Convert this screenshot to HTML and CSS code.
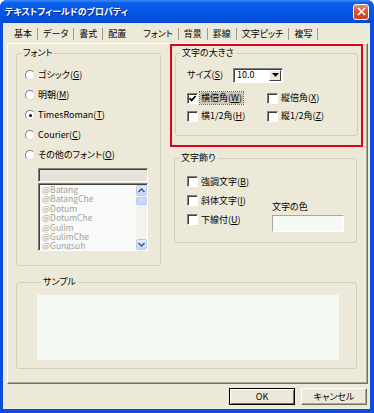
FILE: index.html
```html
<!DOCTYPE html>
<html lang="ja">
<head>
  <meta charset="UTF-8">
  <title>テキストフィールドのプロパティ</title>
  <link rel="stylesheet" href="styles.css">
</head>
<body>
  <div class="window">
    <div class="titlebar">
      <span class="title">テキストフィールドのプロパティ</span>
      <span class="close-btn">
        <svg width="9" height="9" viewBox="0 0 9 9"><path d="M1 1L8 8M8 1L1 8" stroke="#fff" stroke-width="1.7"/></svg>
      </span>
    </div>

    <div class="client">
      <ul class="tabs">
        <li>基本</li>
        <li>データ</li>
        <li>書式</li>
        <li class="no-sep">配置</li>
        <li class="active">フォント</li>
        <li>背景</li>
        <li>罫線</li>
        <li>文字ピッチ</li>
        <li>複写</li>
      </ul>

      <div class="panel">
        <div class="columns">
          <fieldset class="group font-group">
            <legend>フォント</legend>
            <div class="radio-list">
              <label class="radio-row"><span class="radio"></span>ゴシック(<u>G</u>)</label>
              <label class="radio-row"><span class="radio"></span>明朝(<u>M</u>)</label>
              <label class="radio-row"><span class="radio checked"></span>TimesRoman(<u>T</u>)</label>
              <label class="radio-row"><span class="radio"></span>Courier(<u>C</u>)</label>
              <label class="radio-row"><span class="radio"></span>その他のフォント(<u>O</u>)</label>
            </div>
            <div class="font-input"></div>
            <div class="font-list">
              <ul class="font-items">
                <li>@Batang</li>
                <li>@BatangChe</li>
                <li>@Dotum</li>
                <li>@DotumChe</li>
                <li>@Gulim</li>
                <li>@GulimChe</li>
                <li>@Gungsuh</li>
              </ul>
              <div class="scrollbar">
                <span class="scroll-btn">
                  <svg width="9" height="9" viewBox="0 0 9 9"><path d="M1.5 6L4.5 3L7.5 6" fill="none" stroke="#4d6185" stroke-width="1.6"/></svg>
                </span>
                <span class="scroll-track"><span class="scroll-thumb"></span></span>
                <span class="scroll-btn">
                  <svg width="9" height="9" viewBox="0 0 9 9"><path d="M1.5 3L4.5 6L7.5 3" fill="none" stroke="#4d6185" stroke-width="1.6"/></svg>
                </span>
              </div>
            </div>
          </fieldset>

          <div class="right-col">
            <div class="highlight">
              <fieldset class="group size-group">
                <legend>文字の大きさ</legend>
                <div class="size-row">
                  <span class="size-label">サイズ(<u>S</u>)</span>
                  <div class="select">
                    <span class="select-value">10.0</span>
                    <span class="select-btn">
                      <svg width="7" height="4" viewBox="0 0 7 4"><path d="M0 0H7L3.5 4Z" fill="#000"/></svg>
                    </span>
                  </div>
                </div>
                <div class="check-grid">
                  <label class="check-row">
                    <span class="checkbox">
                      <svg width="9" height="9" viewBox="0 0 9 9"><path d="M1.5 4.2L3.6 6.4L7.6 2" fill="none" stroke="#000" stroke-width="1.7"/></svg>
                    </span>
                    <span class="focus">横倍角(<u>W</u>)</span>
                  </label>
                  <label class="check-row"><span class="checkbox"></span>縦倍角(<u>X</u>)</label>
                  <label class="check-row"><span class="checkbox"></span>横1/2角(<u>H</u>)</label>
                  <label class="check-row"><span class="checkbox"></span>縦1/2角(<u>Z</u>)</label>
                </div>
              </fieldset>
            </div>

            <fieldset class="group deco-group">
              <legend>文字飾り</legend>
              <div class="deco-body">
                <div class="deco-checks">
                  <label class="check-row"><span class="checkbox"></span>強調文字(<u>B</u>)</label>
                  <label class="check-row"><span class="checkbox"></span>斜体文字(<u>I</u>)</label>
                  <label class="check-row"><span class="checkbox"></span>下線付(<u>U</u>)</label>
                </div>
                <div class="color-col">
                  <span class="color-label">文字の色</span>
                  <div class="color-box"></div>
                </div>
              </div>
            </fieldset>
          </div>
        </div>

        <fieldset class="group sample-group">
          <legend>サンプル</legend>
          <div class="sample-box"></div>
        </fieldset>
      </div>

      <div class="buttons">
        <button class="btn btn-default">OK</button>
        <button class="btn">キャンセル</button>
      </div>
    </div>
  </div>
</body>
</html>
```

FILE: styles.css
```css
body {
  margin: 0;
  background: #fff;
  font-family: "Noto Sans CJK JP", sans-serif;
  font-size: 9px;
  line-height: 12px;
  color: #000;
  font-feature-settings: "palt";
}

ul {
  list-style: none;
  margin: 0;
  padding: 0;
}

.window {
  width: 374px;
  height: 413px;
  background: #0b4fd8;
  border-radius: 7px 7px 0 0;
  display: flex;
  flex-direction: column;
  overflow: hidden;
}

.titlebar {
  height: 23px;
  box-sizing: border-box;
  display: flex;
  align-items: center;
  justify-content: space-between;
  padding: 0 5px 0 5px;
  background: linear-gradient(#3a8cf7, #0a5deb 3px, #0556e6 12px, #0450dc 19px, #0347cf);
  color: #fff;
}

.title {
  font-weight: bold;
  text-shadow: 1px 1px 0 #0a2a8a;
}

.close-btn {
  width: 14px;
  height: 14px;
  border: 1px solid #fff;
  border-radius: 3px;
  background: linear-gradient(#ea8a70, #dc5834 40%, #c8401c);
  display: flex;
  align-items: center;
  justify-content: center;
}

.client {
  flex: 1;
  margin: 0 4px 4px 3px;
  padding: 4px 2px 0 4px;
  background: #ece9d8;
  display: flex;
  flex-direction: column;
}

/* tab strip */
.tabs {
  display: flex;
  height: 16px;
  box-sizing: border-box;
  padding: 1px 0 0 2px;
}

.tabs li {
  height: 12px;
  padding: 0 5px;
  border-right: 1px solid #9d9b8f;
}

.tabs li.no-sep {
  border-right-color: transparent;
}

.tabs li.active {
  padding-left: 11px;
}

.panel {
  height: 341px;
  box-sizing: border-box;
  border: 1px solid;
  border-color: #fff #716f64 #716f64 #fff;
  box-shadow: inset -1px -1px 0 #aca899;
  padding: 0 0 0 8px;
}

.columns {
  display: flex;
  align-items: flex-start;
  gap: 9px;
}

/* group boxes */
.group {
  margin: 0;
  padding: 0;
  border: 1px solid #d0d0bf;
  border-radius: 3px;
  box-sizing: border-box;
  min-width: 0;
}

.group legend {
  margin-left: 4px;
  padding: 0 2px;
  line-height: 12px;
}

.font-group {
  width: 145px;
  margin-top: 3px;
  padding-bottom: 14px;
}

.radio-list {
  padding: 6px 0 0 8px;
}

.radio-row {
  display: flex;
  align-items: center;
  height: 20px;
}

.radio {
  width: 8px;
  height: 8px;
  margin-right: 3px;
  border-radius: 50%;
  border: 1px solid;
  border-color: #808080 #e0ded4 #e0ded4 #808080;
  background: #fff;
  display: flex;
  align-items: center;
  justify-content: center;
}

.radio.checked::after {
  content: "";
  width: 3px;
  height: 3px;
  border-radius: 50%;
  background: #000;
}

.font-input {
  width: 110px;
  height: 14px;
  box-sizing: border-box;
  margin: 3px 0 0 21px;
  border: 1px solid;
  border-color: #808080 #fff #fff #808080;
  box-shadow: inset 1px 1px 0 #404040;
  background: #e6e4da;
}

.font-list {
  width: 110px;
  height: 68px;
  box-sizing: border-box;
  margin: 1px 0 0 21px;
  border: 1px solid;
  border-color: #808080 #fff #fff #808080;
  box-shadow: inset 1px 1px 0 #404040;
  background: #f8faf7;
  display: flex;
  justify-content: space-between;
  overflow: hidden;
}

.font-items {
  padding: 1px 0 0 3px;
  color: #a3a29c;
  font-size: 8.5px;
}

.font-items li {
  line-height: 9.4px;
}

.scrollbar {
  width: 11px;
  display: flex;
  flex-direction: column;
  margin: 1px 0 0 0;
}

.scroll-btn {
  height: 11px;
  box-sizing: border-box;
  border: 1px solid #b7caf5;
  border-radius: 2px;
  background: linear-gradient(#e3ecfe, #c3d5fb);
  display: flex;
  align-items: center;
  justify-content: center;
}

.scroll-track {
  flex: 1;
  background: #f3f3ee;
  padding-top: 1px;
}

.scroll-thumb {
  display: block;
  height: 6px;
  border: 1px solid #b7caf5;
  border-radius: 2px;
  background: #c8d8fb;
}

/* right column */
.right-col {
  width: 193px;
}

.highlight {
  border: 2px solid #e2001a;
  padding: 1px 3px 9px 3px;
}

.size-group {
  padding-bottom: 10px;
}

.size-row {
  display: flex;
  align-items: center;
  height: 16px;
  margin: 8px 0 0 11px;
}

.size-label {
  width: 46px;
}

.select {
  width: 50px;
  height: 15px;
  box-sizing: border-box;
  border: 1px solid;
  border-color: #808080 #fff #fff #808080;
  box-shadow: inset 1px 1px 0 #404040;
  background: #fff;
  display: flex;
  align-items: center;
  justify-content: space-between;
  padding: 1px 1px 1px 3px;
}

.select-btn {
  width: 12px;
  height: 11px;
  box-sizing: border-box;
  background: #ece9d8;
  border: 1px solid;
  border-color: #fff #404040 #404040 #fff;
  display: flex;
  align-items: center;
  justify-content: center;
}

.check-grid {
  display: grid;
  grid-template-columns: 80px 80px;
  margin: 6px 0 0 11px;
}

.check-row {
  display: flex;
  align-items: center;
  height: 18px;
}

.checkbox {
  width: 11px;
  height: 11px;
  box-sizing: border-box;
  margin-right: 3px;
  border: 1px solid;
  border-color: #808080 #fff #fff #808080;
  box-shadow: inset 1px 1px 0 #404040;
  background: #fff;
  display: flex;
  align-items: center;
  justify-content: center;
}

.focus {
  background: #c9c6bb;
  outline: 1px dotted #666;
  margin-left: -1px;
  padding: 0 1px;
}

.deco-group {
  width: 183px;
  margin: 5px 0 0 4px;
  padding-bottom: 10px;
}

.deco-body {
  display: flex;
  padding: 8px 0 0 12px;
}

.deco-checks {
  width: 85px;
}

.deco-checks .check-row {
  height: 19px;
}

.color-col {
  display: flex;
  flex-direction: column;
  padding-top: 29px;
}

.color-box {
  width: 72px;
  height: 17px;
  box-sizing: border-box;
  margin-top: 2px;
  border: 1px solid;
  border-color: #aca899 #fff #fff #aca899;
  background: #f6faf4;
}

/* sample */
.sample-group {
  width: 341px;
  margin-top: 10px;
  padding: 7px 0 8px 20px;
}

.sample-box {
  width: 302px;
  height: 65px;
  background: #f6faf4;
}

.buttons {
  display: flex;
  justify-content: flex-end;
  gap: 6px;
  margin-top: 4px;
  padding-right: 1px;
}

.btn {
  width: 66px;
  height: 17px;
  padding: 0;
  font: inherit;
  color: #000;
  background: #ece9d8;
  border: 1px solid;
  border-color: #fff #716f64 #716f64 #fff;
  box-shadow: inset -1px -1px 0 #aca899;
}

.btn-default {
  border-color: #000;
  box-shadow: inset 1px 1px 0 #fff, inset -1px -1px 0 #716f64;
}
```
